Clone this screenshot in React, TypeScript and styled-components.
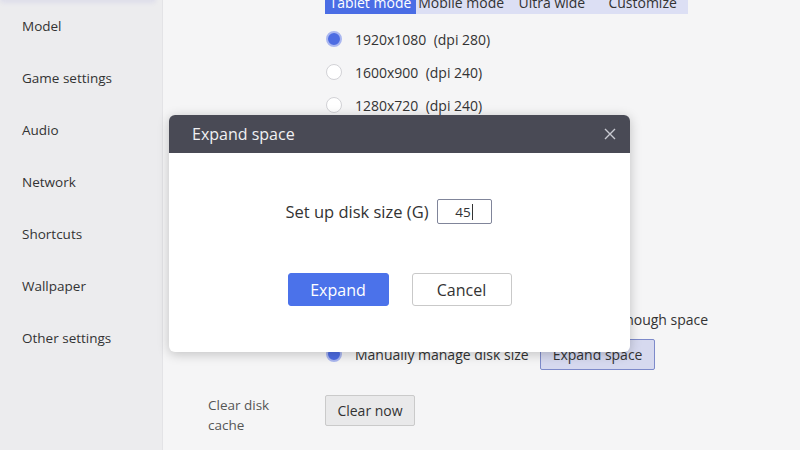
import React from "react";
import styled, { createGlobalStyle } from "styled-components";

const Global = createGlobalStyle`
  html, body { margin: 0; padding: 0; width: 800px; height: 450px; overflow: hidden; }
  body { font-family: "Open Sans", "Liberation Sans", sans-serif; color: #333; }
  * { box-sizing: border-box; }
`;

const Page = styled.div`
  position: relative;
  display: flex;
  width: 800px;
  height: 450px;
  overflow: hidden;
`;

const Sidebar = styled.nav`
  width: 163px;
  flex-shrink: 0;
  background: #ececee;
  border-right: 1px solid #e3e3e6;
  overflow: hidden;
`;

const NavList = styled.ul`
  list-style: none;
  margin: -52px 0 0;
  padding: 0;
`;

const NavItem = styled.li<{ $active?: boolean }>`
  height: 52px;
  display: flex;
  align-items: center;
  padding-left: 22px;
  font-size: 13.5px;
  color: #333;
  margin: 0 6px 0 0;
  border-radius: 4px;
  background: ${(p) => (p.$active ? "#e6e6f3" : "transparent")};
  box-shadow: ${(p) => (p.$active ? "0 3px 4px rgba(120, 125, 210, 0.12)" : "none")};
`;

const Main = styled.main`
  flex: 1;
  background: #f5f5f6;
  overflow: hidden;
`;

const Content = styled.div`
  margin-top: -14px;
  padding-left: 45px;
`;

const Row = styled.div<{ $top?: number }>`
  display: flex;
  align-items: flex-start;
  margin-top: ${(p) => p.$top ?? 0}px;
`;

const Label = styled.div`
  width: 117px;
  flex-shrink: 0;
  padding-right: 32px;
  font-size: 13.5px;
  line-height: 20px;
  color: #555;
`;

const Field = styled.div`
  display: flex;
  flex-direction: column;
`;

const Tabs = styled.div`
  display: grid;
  grid-template-columns: repeat(4, 90.75px);
  height: 28px;
  background: #dcdff4;
`;

const Tab = styled.div<{ $active?: boolean }>`
  display: flex;
  align-items: center;
  justify-content: center;
  padding-top: 5px;
  font-size: 14px;
  color: ${(p) => (p.$active ? "#fff" : "#333")};
  background: ${(p) => (p.$active ? "#4a6de5" : "transparent")};
`;

const RadioGroup = styled.div<{ $top?: number }>`
  display: flex;
  flex-direction: column;
  margin-top: ${(p) => p.$top ?? 0}px;
`;

const RadioRow = styled.div<{ $height?: number }>`
  height: ${(p) => p.$height ?? 33}px;
  display: flex;
  align-items: center;
  font-size: 14px;
  color: #333;
  white-space: pre;
`;

const Circle = styled.span<{ $checked?: boolean }>`
  width: 16px;
  height: 16px;
  margin: 0 13px 0 1px;
  border-radius: 50%;
  flex-shrink: 0;
  background: ${(p) => (p.$checked ? "#4d6ce2" : "#fff")};
  border: ${(p) => (p.$checked ? "2px solid #aab7f0" : "1px solid #d2d2d6")};
`;

const SoftButton = styled.button<{ $tone?: "blue" | "gray" }>`
  height: 31px;
  padding: 0 12px;
  font-family: inherit;
  font-size: 14px;
  color: #333;
  border-radius: 2px;
  background: ${(p) => (p.$tone === "blue" ? "#d6d9ef" : "#e9e9ea")};
  border: 1px solid ${(p) => (p.$tone === "blue" ? "#7d8aca" : "#cacaca")};
`;

const InlineButton = styled(SoftButton)`
  margin-left: 11px;
`;

const ClearButton = styled(SoftButton)`
  width: 90px;
  padding: 0;
`;

const Dialog = styled.div`
  position: absolute;
  left: 169px;
  top: 115px;
  width: 461px;
  height: 237px;
  border-radius: 6px;
  overflow: hidden;
  background: #fff;
  box-shadow: 0 2px 12px rgba(0, 0, 0, 0.22);
  display: flex;
  flex-direction: column;
`;

const DialogHeader = styled.div`
  height: 38px;
  flex-shrink: 0;
  background: #494a55;
  display: flex;
  align-items: center;
  justify-content: space-between;
  padding: 0 14px 0 23px;
`;

const DialogTitle = styled.span`
  font-size: 16px;
  color: #f0f0f2;
`;

const CloseIcon = styled.svg`
  width: 12px;
  height: 12px;
  display: block;
`;

const DialogBody = styled.div`
  flex: 1;
  display: flex;
  flex-direction: column;
  align-items: center;
  padding-top: 46px;
`;

const SizeRow = styled.div`
  display: flex;
  align-items: center;
  gap: 8px;
  padding-right: 22px;
`;

const SizeLabel = styled.span`
  font-size: 16.5px;
  color: #333;
`;

const SizeInput = styled.div`
  width: 55px;
  height: 25px;
  border: 1px solid #80859a;
  border-radius: 2px;
  display: flex;
  align-items: center;
  justify-content: center;
  font-size: 13.5px;
  color: #333;
`;

const Caret = styled.span`
  width: 1px;
  height: 16px;
  margin-left: 1px;
  background: #333;
`;

const Actions = styled.div`
  display: flex;
  gap: 23px;
  margin-top: 49px;
`;

const DialogButton = styled.button<{ $primary?: boolean }>`
  width: ${(p) => (p.$primary ? 101 : 100)}px;
  height: 33px;
  border-radius: 3px;
  font-family: inherit;
  font-size: 16px;
  color: ${(p) => (p.$primary ? "#fff" : "#333")};
  background: ${(p) => (p.$primary ? "#4b72ea" : "#fff")};
  border: 1px solid ${(p) => (p.$primary ? "#4b72ea" : "#c9c9c9")};
`;

const navItems = ["Display", "Model", "Game settings", "Audio", "Network", "Shortcuts", "Wallpaper", "Other settings"];
const tabs = ["Tablet mode", "Mobile mode", "Ultra wide", "Customize"];
const resolutions = ["1920x1080  (dpi 280)", "1600x900  (dpi 240)", "1280x720  (dpi 240)"];
const performance = ["High (4 cores, 4G)", "Medium (2 cores, 3G)", "Low (2 cores, 2G)"];

export default function App() {
  return (
    <>
      <Global />
      <Page>
        <Sidebar>
          <NavList>
            {navItems.map((n, i) => (
              <NavItem key={n} $active={i === 0}>
                {n}
              </NavItem>
            ))}
          </NavList>
        </Sidebar>
        <Main>
          <Content>
            <Row>
              <Label />
              <Field>
                <Tabs>
                  {tabs.map((t, i) => (
                    <Tab key={t} $active={i === 0}>
                      {t}
                    </Tab>
                  ))}
                </Tabs>
                <RadioGroup $top={8.5}>
                  {resolutions.map((r, i) => (
                    <RadioRow key={r}>
                      <Circle $checked={i === 0} />
                      {r}
                    </RadioRow>
                  ))}
                </RadioGroup>
              </Field>
            </Row>
            <Row $top={40}>
              <Label>Performance</Label>
              <Field>
                <RadioGroup>
                  {performance.map((r, i) => (
                    <RadioRow key={r}>
                      <Circle $checked={i === 1} />
                      {r}
                    </RadioRow>
                  ))}
                </RadioGroup>
              </Field>
            </Row>
            <Row $top={42}>
              <Label>Disk space</Label>
              <Field>
                <RadioRow>
                  <Circle />
                  Automatically expand when there is not enough space
                </RadioRow>
                <RadioRow $height={37}>
                  <Circle $checked />
                  Manually manage disk size
                  <InlineButton $tone="blue">Expand space</InlineButton>
                </RadioRow>
              </Field>
            </Row>
            <Row $top={22}>
              <Label>Clear disk cache</Label>
              <ClearButton>Clear now</ClearButton>
            </Row>
          </Content>
        </Main>
        <Dialog>
          <DialogHeader>
            <DialogTitle>Expand space</DialogTitle>
            <CloseIcon viewBox="0 0 12 12">
              <path d="M1 1 L11 11 M11 1 L1 11" stroke="#c9cad2" strokeWidth="1.4" fill="none" />
            </CloseIcon>
          </DialogHeader>
          <DialogBody>
            <SizeRow>
              <SizeLabel>Set up disk size (G)</SizeLabel>
              <SizeInput>
                45
                <Caret />
              </SizeInput>
            </SizeRow>
            <Actions>
              <DialogButton $primary>Expand</DialogButton>
              <DialogButton>Cancel</DialogButton>
            </Actions>
          </DialogBody>
        </Dialog>
      </Page>
    </>
  );
}
